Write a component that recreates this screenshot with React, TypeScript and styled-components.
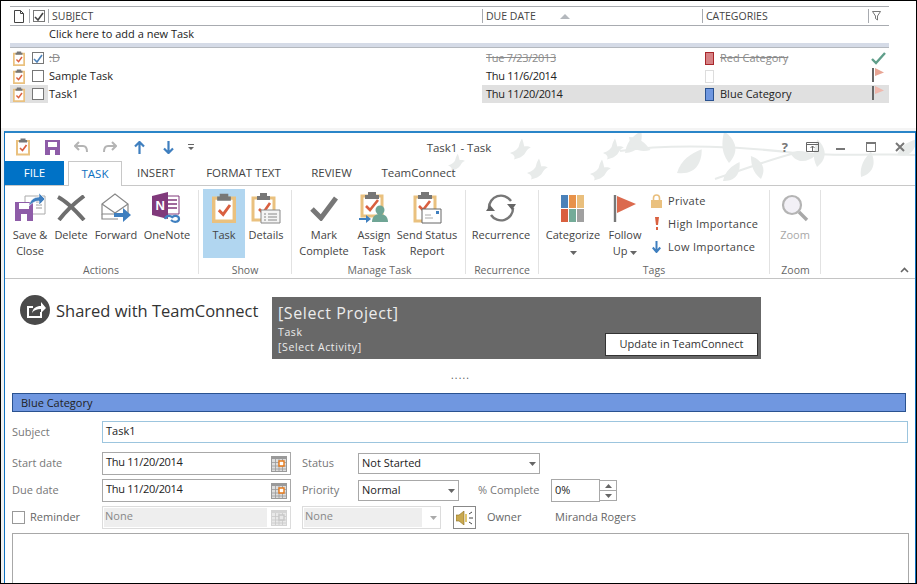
import styled, { createGlobalStyle } from "styled-components";

const GlobalStyle = createGlobalStyle`
  html, body {
    margin: 0;
    padding: 0;
    background: #fff;
  }
  * {
    box-sizing: border-box;
  }
`;

const Frame = styled.div`
  width: 917px;
  height: 584px;
  border: 1px solid #000;
  background: #f0f0f0;
  overflow: hidden;
  font-family: "Open Sans", "Noto Sans", sans-serif;
  font-size: 11px;
  color: #333;
  display: flex;
  flex-direction: column;
`;

/* ---------- task list ---------- */

const ListPanel = styled.div`
  height: 130px;
  background: #fff;
  padding: 5px 27px 0 9px;
  border-bottom: 3px solid #f4f4f4;
  flex: none;
`;

const ListRow = styled.div<{ $h?: number }>`
  display: grid;
  grid-template-columns: 19px 19px 434px 220px 166px 21px;
  height: ${(p) => p.$h ?? 18}px;
  align-items: center;
`;

const HeaderRow = styled(ListRow)`
  border-top: 1px solid #a8abb0;
  border-bottom: 1px solid #a8abb0;
  color: #444;
  font-size: 10.5px;
`;

const HeadCell = styled.div<{ $line?: boolean }>`
  height: 14px;
  display: flex;
  align-items: center;
  padding-left: ${(p) => (p.$line ? 3 : 4)}px;
  gap: 24px;
  border-left: ${(p) => (p.$line ? "1px solid #a8abb0" : "none")};
`;

const AddRow = styled.div`
  height: 17px;
  line-height: 16px;
  padding-left: 39px;
  color: #222;
`;

const Band = styled.div`
  height: 5px;
  background: #d5dbe7;
  border-bottom: 1px solid #b4b8be;
  margin-bottom: 1px;
`;

const Cell = styled.div<{ $sel?: boolean; $done?: boolean }>`
  height: 18px;
  display: flex;
  align-items: center;
  gap: 6px;
  padding-left: 4px;
  padding-bottom: 2px;
  background: ${(p) => (p.$sel ? "#e0e0e0" : "transparent")};
  color: ${(p) => (p.$done ? "#8b8b8b" : "#222")};
  text-decoration: ${(p) => (p.$done ? "line-through" : "none")};
`;

const IconCell = styled(Cell)`
  padding-left: 3px;
  padding-bottom: 0;
`;

const SubjectCell = styled(Cell)`
  padding-left: 1px;
`;

const DateCell = styled(Cell)`
  letter-spacing: -0.3px;
`;

const Swatch = styled.span<{ $fill: string; $edge: string }>`
  width: 9px;
  height: 13px;
  margin: 2px 0 0 -1px;
  background: ${(p) => p.$fill};
  border: 1px solid ${(p) => p.$edge};
  flex: none;
`;

const TinyCheck = styled.span`
  width: 12px;
  height: 12px;
  border: 1px solid #777;
  background: #fff;
  display: flex;
  align-items: center;
  justify-content: center;
`;

/* ---------- task window ---------- */

const TaskWindow = styled.div`
  position: relative;
  flex: 1;
  margin-left: 3px;
  min-height: 0;
  background: #fff;
  border-top: 2px solid #2a85c8;
  border-left: 1px solid #0f72c0;
  border-right: 1px solid #0f72c0;
  overflow: hidden;
`;

const Foliage = styled.svg`
  position: absolute;
  top: 0;
  right: 0;
  pointer-events: none;
`;

const TitleBar = styled.div`
  position: relative;
  height: 28px;
  display: grid;
  grid-template-columns: 1fr auto 1fr;
  align-items: center;
`;

const QuickAccess = styled.div`
  display: flex;
  align-items: center;
  height: 28px;
  padding-left: 11px;
`;

const QuickSlot = styled.span<{ $w: number }>`
  width: ${(p) => p.$w}px;
  display: flex;
  align-items: center;
  flex: none;
`;

const WindowTitle = styled.div`
  font-size: 11.5px;
  color: #444;
  margin-right: 2px;
`;

const WindowControls = styled.div`
  display: flex;
  justify-content: flex-end;
  align-items: center;
  height: 28px;
  padding-right: 10px;
`;

const ControlSlot = styled.span<{ $w: number }>`
  width: ${(p) => p.$w}px;
  display: flex;
  justify-content: flex-end;
  color: #777;
  font-weight: 700;
  font-size: 13px;
`;

const TabStrip = styled.div`
  position: relative;
  display: flex;
  height: 25px;
  border-bottom: 1px solid #c8c8c8;
`;

const FileTab = styled.div`
  width: 59px;
  height: 24px;
  margin-right: 4px;
  padding-bottom: 2px;
  background: #0072c6;
  color: #fff;
  font-size: 11.5px;
  display: flex;
  align-items: center;
  justify-content: center;
`;

const Tab = styled.div<{ $w: number; $active?: boolean }>`
  width: ${(p) => p.$w}px;
  height: ${(p) => (p.$active ? 25 : 24)}px;
  padding-bottom: 2px;
  font-size: 11.5px;
  display: flex;
  align-items: center;
  justify-content: center;
  background: ${(p) => (p.$active ? "#fff" : "transparent")};
  color: ${(p) => (p.$active ? "#0b6fc0" : "#444")};
  border: ${(p) => (p.$active ? "1px solid #c8c8c8" : "none")};
  border-bottom: none;
`;

const Ribbon = styled.div`
  height: 93px;
  display: flex;
  border-bottom: 1px solid #c4c4c4;
  padding-top: 4px;
`;

const Group = styled.div<{ $w: number; $pad?: number }>`
  width: ${(p) => p.$w}px;
  height: 84px;
  flex: none;
  padding-left: ${(p) => p.$pad ?? 0}px;
  border-right: 1px solid #e2e2e2;
  display: flex;
  flex-direction: column;
`;

const GroupBody = styled.div`
  flex: 1;
  display: flex;
  margin-top: -1px;
  min-height: 0;
`;

const GroupLabel = styled.div`
  height: 16px;
  line-height: 16px;
  margin: 0 0 -4px -4px;
  text-align: center;
  color: #666;
  font-size: 10.5px;
  flex: none;
`;

const RibbonButton = styled.div<{ $w: number; $on?: boolean; $dim?: boolean }>`
  width: ${(p) => p.$w}px;
  height: 69px;
  flex: none;
  padding-top: 3px;
  display: flex;
  flex-direction: column;
  align-items: center;
  background: ${(p) => (p.$on ? "#b1d6f0" : "transparent")};
  color: ${(p) => (p.$dim ? "#a8a8a8" : "#444")};
`;

const IconBox = styled.div`
  height: 32px;
  display: flex;
  align-items: center;
  justify-content: center;
  flex: none;
`;

const ButtonText = styled.div`
  margin-top: 3px;
  line-height: 16px;
  text-align: center;
  white-space: nowrap;
`;

const SmallList = styled.div`
  display: flex;
  flex-direction: column;
  margin-left: 3px;
`;

const SmallItem = styled.div`
  height: 23px;
  display: flex;
  align-items: center;
  gap: 5px;
  color: #444;
  letter-spacing: 0.3px;
`;

const SmallIcon = styled.span`
  width: 13px;
  display: flex;
  justify-content: center;
`;

const Collapse = styled.div`
  flex: 1;
  display: flex;
  align-items: flex-end;
  justify-content: flex-end;
  padding: 0 6px 5px 0;
`;

/* ---------- form ---------- */

const Content = styled.div`
  padding: 18px 0 0 7px;
`;

const SharedRow = styled.div`
  display: flex;
  height: 62px;
`;

const SharedInfo = styled.div`
  width: 260px;
  padding-left: 8px;
  margin-top: -3px;
  height: 32px;
  display: flex;
  align-items: center;
  gap: 6px;
  font-size: 16.5px;
  color: #333;
  white-space: nowrap;
  flex: none;
`;

const ProjectPanel = styled.div`
  width: 489px;
  height: 62px;
  background: #686868;
  color: #ececec;
  display: flex;
  justify-content: space-between;
  padding: 0 3px 3px 6px;
`;

const ProjectText = styled.div`
  display: flex;
  flex-direction: column;
  font-size: 10.5px;
  line-height: 15px;
  letter-spacing: 0.6px;
`;

const ProjectName = styled.div`
  font-size: 16px;
  line-height: 24px;
  margin-top: 4px;
`;

const UpdateButton = styled.div`
  align-self: flex-end;
  width: 153px;
  height: 23px;
  padding-bottom: 3px;
  background: #fff;
  border: 1px solid #333;
  color: #333;
  display: flex;
  align-items: center;
  justify-content: center;
`;

const Dots = styled.div`
  height: 34px;
  line-height: 33px;
  padding-left: 439px;
  font-size: 10px;
  color: #555;
  letter-spacing: 1.2px;
`;

const CategoryBar = styled.div`
  width: 894px;
  height: 19px;
  background: #7097e0;
  border: 1px solid #2a5290;
  color: #222;
  padding-left: 8px;
  line-height: 17px;
`;

const FormRow = styled.div<{ $top: number; $h?: number }>`
  display: flex;
  align-items: center;
  height: ${(p) => p.$h ?? 23}px;
  margin-top: ${(p) => p.$top}px;
`;

const FieldLabel = styled.div<{ $w: number; $ml?: number; $dim?: boolean }>`
  width: ${(p) => p.$w}px;
  margin-left: ${(p) => p.$ml ?? 0}px;
  padding-bottom: 2px;
  flex: none;
  color: ${(p) => (p.$dim ? "#666" : "#777")};
`;

const SubjectInput = styled.div`
  width: 806px;
  height: 22px;
  border: 1px solid #9cc5de;
  padding-left: 3px;
  line-height: 18px;
  color: #222;
`;

const Box = styled.div<{ $w: number; $h?: number; $off?: boolean; $ml?: number }>`
  width: ${(p) => p.$w}px;
  height: ${(p) => p.$h ?? 23}px;
  margin-left: ${(p) => p.$ml ?? 0}px;
  flex: none;
  display: flex;
  align-items: center;
  justify-content: space-between;
  border: 1px solid ${(p) => (p.$off ? "#dcdcdc" : "#a8a8a8")};
  padding: ${(p) => (p.$off ? "1px 3px 1px 1px" : "0 3px")};
  color: ${(p) => (p.$off ? "#888" : "#222")};
`;

const BoxValue = styled.span`
  padding-bottom: 2px;
`;

const DateValue = styled.span`
  padding-bottom: 5px;
  letter-spacing: -0.3px;
`;

const OffValue = styled.span<{ $w: number }>`
  width: ${(p) => p.$w}px;
  height: 100%;
  background: #eee;
  padding-left: 1px;
  line-height: 15px;
`;

const SpinBox = styled.div`
  width: 17px;
  height: 21px;
  flex: none;
  border: 1px solid #a8a8a8;
  border-left: none;
  display: flex;
  flex-direction: column;
`;

const SpinPart = styled.div<{ $up?: boolean }>`
  flex: 1;
  display: flex;
  align-items: center;
  justify-content: center;
  border-bottom: ${(p) => (p.$up ? "1px solid #a8a8a8" : "none")};
`;

const CheckBox = styled.div`
  width: 13px;
  height: 13px;
  border: 1px solid #999;
  margin-right: 5px;
  flex: none;
`;

const SpeakerButton = styled.div`
  width: 23px;
  height: 23px;
  margin-left: 12px;
  border: 1px solid #888;
  display: flex;
  align-items: center;
  justify-content: center;
  flex: none;
`;

const OwnerName = styled.div`
  color: #666;
  padding-bottom: 2px;
`;

const Notes = styled.div`
  width: 897px;
  height: 60px;
  margin-top: 4px;
  border: 1px solid #a8a8a8;
`;

/* ---------- drawings ---------- */

function Clipboard({ size = 14 }: { size?: number }) {
  return (
    <svg width={size} height={size * 1.25} viewBox="0 0 28 35">
      <path d="M2 6h24v27H2z" fill="#fff" stroke="#eac17f" strokeWidth="4" />
      <path d="M9 1h10v3h3v5H6V4h3z" fill="#777" />
      <path d="M8 20l5 5 8-11" fill="none" stroke="#d95f3f" strokeWidth="3.4" />
    </svg>
  );
}

const Tri = ({ up, c = "#666" }: { up?: boolean; c?: string }) => (
  <svg width="7" height="4" viewBox="0 0 7 4">
    <path d={up ? "M3.5 0L7 4H0z" : "M0 0h7L3.5 4z"} fill={c} />
  </svg>
);

const Cal = ({ off }: { off?: boolean }) => (
  <svg width="16" height="16" viewBox="0 0 16 16">
    <path d="M0 0h16v16H0z" fill={off ? "#d4d4d4" : "#9a9a9a"} />
    <path d="M1 3h14v12H1z" fill={off ? "#e8e8e8" : "#ddd"} />
    <path
      d="M4.5 3v12M8 3v12M11.5 3v12M1 6.5h14M1 10h14M1 13h14"
      stroke={off ? "#c8c8c8" : "#999"}
      strokeWidth=".8"
    />
    <path d="M8 5h5v5H8z" fill={off ? "#e8e8e8" : "#fff"} stroke={off ? "#c8c8c8" : "#e67a1a"} strokeWidth="1.4" />
  </svg>
);

const Flag = ({ c }: { c: string }) => (
  <svg width="14" height="16" viewBox="0 0 14 16">
    <path d="M1 1v14" stroke="#666" strokeWidth="2" />
    <path d="M3 1l9 4.5L3 9z" fill={c} />
  </svg>
);

const TreeLeaf = ({ x, y, r, s = 1 }: { x: number; y: number; r: number; s?: number }) => (
  <path
    d="M0 0C5-8 12-10 20-11 18-3 12 5 0 0z"
    transform={`translate(${x} ${y}) rotate(${r}) scale(${s})`}
  />
);

const Bird = ({ x, y, s = 1 }: { x: number; y: number; s?: number }) => (
  <path
    d="M0 10C6 8 9 6 11 2 12-3 14-6 15-8 17-4 17 0 18 2 21 1 24 2 26 3 22 4 21 7 19 10 16 15 10 17 5 18 7 15 5 12 0 10z"
    transform={`translate(${x} ${y}) scale(${s})`}
  />
);

function TitleFoliage() {
  return (
    <Foliage width="470" height="52" viewBox="0 0 470 52">
      <g fill="#e8ebea">
        <Bird x={3} y={26} s={0.65} />
        <Bird x={65} y={12} s={0.8} />
        <Bird x={82} y={32} s={0.8} />
        <Bird x={145} y={33} s={0.8} />
        <Bird x={158} y={12} s={0.8} />
        <TreeLeaf x={180} y={20} r={-25} s={1.2} />
        <TreeLeaf x={184} y={4} r={60} s={1.1} />
        <TreeLeaf x={232} y={40} r={-15} s={1.5} />
        <TreeLeaf x={284} y={30} r={-70} s={1.4} />
        <TreeLeaf x={278} y={48} r={-20} s={1.1} />
        <TreeLeaf x={316} y={46} r={-85} s={1.1} />
        <TreeLeaf x={372} y={34} r={-60} s={1.2} />
        <TreeLeaf x={416} y={44} r={-40} s={1.2} />
        <TreeLeaf x={345} y={20} r={35} s={1.1} />
        <TreeLeaf x={452} y={22} r={-10} s={1.1} />
      </g>
      <path
        d="M175 18C230 10 300 14 350 20 400 24 440 20 470 22M270 46C300 36 320 28 350 20"
        stroke="#e8ebea"
        strokeWidth="2"
        fill="none"
      />
    </Foliage>
  );
}

function SaveClose() {
  return (
    <svg width="32" height="32" viewBox="0 0 32 32">
      <path d="M11 4h20v18H11z" fill="#fff" stroke="#aaa" />
      <path d="M22 10h6M22 13h6M22 16h6" stroke="#999" />
      <path d="M1 10h18v19H1z" fill="#8e5ca8" />
      <path d="M5 11h10v6H5zM7 22h6v7H7z" fill="#fff" />
      <path d="M15 14C16 8 20 5 25 5V1l6 6-6 6V9c-4 0-7 2-10 5z" fill="#3f7fbf" stroke="#fff" strokeWidth=".6" />
    </svg>
  );
}

function Forward() {
  return (
    <svg width="32" height="32" viewBox="0 0 32 32">
      <path d="M2 12L15 2l13 10v10H2z" fill="#fff" stroke="#888" strokeWidth="1.2" />
      <path d="M2 12l13 9 13-9" fill="none" stroke="#888" strokeWidth="1.2" />
      <path d="M2 22v5h16" fill="none" stroke="#888" strokeWidth="1.2" />
      <path d="M14 21h9v-5l8 7-8 7v-5h-9z" fill="#3f7fbf" />
    </svg>
  );
}

function OneNote() {
  return (
    <svg width="30" height="32" viewBox="0 0 30 32">
      <path d="M12 4h15v18H12z" fill="#fff" stroke="#80397b" />
      <path d="M16 8h9M16 12h9M16 16h9" stroke="#80397b" strokeWidth="1.4" />
      <path d="M0 4l16-4v27L0 23z" fill="#80397b" />
      <text x="3.5" y="18" fontSize="13" fontWeight="700" fill="#fff" fontFamily="Liberation Sans">N</text>
      <path d="M13 27c1-4 6-4 8-1m-2 2c3 3 8 2 8-1 0-4-6-4-7-1" fill="none" stroke="#3f7fbf" strokeWidth="2.2" />
    </svg>
  );
}

function Details() {
  return (
    <svg width="30" height="32" viewBox="0 0 30 32">
      <path d="M2 6h21v22H2z" fill="#fff" stroke="#eac17f" strokeWidth="3" />
      <path d="M9 1h7v3h3v4H6V4h3z" fill="#777" />
      <path d="M8 17l4 4 7-10" fill="none" stroke="#d95f3f" strokeWidth="2.6" />
      <path d="M10 18h19v13H10z" fill="#f4f4f4" stroke="#888" />
      <path d="M13 22h2M17 22h9M13 25h2M17 25h9M13 28h2M17 28h9" stroke="#888" />
    </svg>
  );
}

function AssignTask() {
  return (
    <svg width="30" height="32" viewBox="0 0 30 32">
      <path d="M3 4h20v20H3z" fill="#fff" stroke="#eac17f" strokeWidth="3" />
      <path d="M9 0h8v3h3v4H6V3h3z" fill="#777" />
      <path d="M7 14l4 4 8-10" fill="none" stroke="#d95f3f" strokeWidth="2.6" />
      <circle cx="21" cy="18" r="4.5" fill="#6fa595" />
      <path d="M13 30c0-6 4-8 8-8s8 2 8 8z" fill="#6fa595" />
      <path d="M0 26h7v-3l5 4-5 4v-3H0z" fill="#3f7fbf" />
    </svg>
  );
}

function StatusReport() {
  return (
    <svg width="30" height="32" viewBox="0 0 30 32">
      <path d="M3 5h20v24H3z" fill="#fff" stroke="#eac17f" strokeWidth="3" />
      <path d="M9 0h8v3h3v4H6V3h3z" fill="#777" />
      <path d="M7 14l4 4 7-9" fill="none" stroke="#d95f3f" strokeWidth="2.6" />
      <path d="M10 17h19v14H10z" fill="#fff" stroke="#666" />
      <path d="M13 26h8M13 23h6" stroke="#aaa" />
      <path d="M24 19h3v3h-3z" fill="#3f7fbf" />
    </svg>
  );
}

function Recurrence() {
  return (
    <svg width="32" height="30" viewBox="0 0 32 30">
      <path d="M4 15A12 12 0 0 1 26 8" fill="none" stroke="#777" strokeWidth="2.4" />
      <path d="M28 15A12 12 0 0 1 6 22" fill="none" stroke="#777" strokeWidth="2.4" />
      <path d="M22 11h9l-4 6zM1 18l4-6 5 6z" fill="#666" />
    </svg>
  );
}

function Categorize() {
  const cells = ["#4b81b9", "#e8924a", "#e9bf7d", "#d9603f", "#74ab98", "#a0a0a0"];
  return (
    <svg width="24" height="27" viewBox="0 0 24 27">
      {cells.map((c, i) => (
        <rect key={c} x={(i % 3) * 8} y={i < 3 ? 0 : 14} width="7" height="13" fill={c} />
      ))}
    </svg>
  );
}

function Speaker() {
  return (
    <svg width="17" height="14" viewBox="0 0 17 14">
      <path d="M0 4h3l5-4v14l-5-4H0z" fill="#c9a94f" stroke="#8a6d20" strokeWidth=".6" />
      <path d="M9 3h2v8H9z" fill="#e0c670" />
      <path d="M13 3l3-2M13 7h4M13 11l3 2" stroke="#444" />
    </svg>
  );
}

export default function App() {
  return (
    <>
      <GlobalStyle />
      <Frame>
        <ListPanel>
          <HeaderRow $h={20}>
            <HeadCell>
              <svg width="10" height="13" viewBox="0 0 10 13">
                <path d="M.5.5h6l3 3v9H.5zM6.5.5v3h3" fill="#fff" stroke="#444" />
              </svg>
            </HeadCell>
            <HeadCell $line>
              <TinyCheck>
                <svg width="10" height="9" viewBox="0 0 10 9">
                  <path d="M1 5l3 3 5-7" fill="none" stroke="#444" strokeWidth="1.6" />
                </svg>
              </TinyCheck>
            </HeadCell>
            <HeadCell $line>SUBJECT</HeadCell>
            <HeadCell $line>
              DUE DATE
              <svg width="10" height="5" viewBox="0 0 10 5">
                <path d="M5 0l5 5H0z" fill="#b4b8bd" />
              </svg>
            </HeadCell>
            <HeadCell $line>CATEGORIES</HeadCell>
            <HeadCell $line>
              <svg width="9" height="10" viewBox="0 0 9 10">
                <path d="M.5.5h8L5.5 5v4L3.5 7.5V5z" fill="#fff" stroke="#555" strokeWidth=".8" />
              </svg>
            </HeadCell>
          </HeaderRow>
          <AddRow>Click here to add a new Task</AddRow>
          <Band />
          <ListRow>
            <IconCell>
              <Clipboard size={12} />
            </IconCell>
            <IconCell>
              <TinyCheck>
                <svg width="10" height="9" viewBox="0 0 10 9">
                  <path d="M1 5l3 3 5-7" fill="none" stroke="#4b81b9" strokeWidth="1.6" />
                </svg>
              </TinyCheck>
            </IconCell>
            <SubjectCell $done>:D</SubjectCell>
            <DateCell $done>Tue 7/23/2013</DateCell>
            <Cell $done>
              <Swatch $fill="#d68285" $edge="#a8272b" />
              Red Category
            </Cell>
            <IconCell>
              <svg width="15" height="13" viewBox="0 0 15 13">
                <path d="M1 7l4 4 9-10" fill="none" stroke="#5f9e8a" strokeWidth="2.4" />
              </svg>
            </IconCell>
          </ListRow>
          <ListRow>
            <IconCell>
              <Clipboard size={12} />
            </IconCell>
            <IconCell>
              <TinyCheck />
            </IconCell>
            <SubjectCell>Sample Task</SubjectCell>
            <DateCell>Thu 11/6/2014</DateCell>
            <Cell>
              <Swatch $fill="#fff" $edge="#ddd" />
            </Cell>
            <Cell>
              <Flag c="#e8a594" />
            </Cell>
          </ListRow>
          <ListRow>
            <IconCell $sel>
              <Clipboard size={12} />
            </IconCell>
            <IconCell $sel>
              <TinyCheck />
            </IconCell>
            <SubjectCell>Task1</SubjectCell>
            <DateCell $sel>Thu 11/20/2014</DateCell>
            <Cell $sel>
              <Swatch $fill="#6f97e0" $edge="#2a5290" />
              Blue Category
            </Cell>
            <Cell $sel>
              <Flag c="#efb8ad" />
            </Cell>
          </ListRow>
        </ListPanel>

        <TaskWindow>
          <TitleFoliage />
          <TitleBar>
            <QuickAccess>
              <QuickSlot $w={29}>
                <Clipboard size={14} />
              </QuickSlot>
              <QuickSlot $w={29}>
                <svg width="15" height="15" viewBox="0 0 15 15">
                  <path d="M0 0h15v15H0z" fill="#8e5ca8" />
                  <path d="M3 2h9v5H3zM5 10h5v5H5z" fill="#fff" />
                </svg>
              </QuickSlot>
              <QuickSlot $w={29}>
                <svg width="14" height="12" viewBox="0 0 14 12">
                  <path d="M5 1L1 5l4 4M1 5h8c3 0 4 2 4 6" fill="none" stroke="#b4b4b4" strokeWidth="2" />
                </svg>
              </QuickSlot>
              <QuickSlot $w={31}>
                <svg width="14" height="12" viewBox="0 0 14 12">
                  <path d="M9 1l4 4-4 4M13 5H5C2 5 1 7 1 11" fill="none" stroke="#b4b4b4" strokeWidth="2" />
                </svg>
              </QuickSlot>
              <QuickSlot $w={29}>
                <svg width="11" height="13" viewBox="0 0 11 13">
                  <path d="M5.5 13V1M1 5.5L5.5 1 10 5.5" fill="none" stroke="#3f7fbf" strokeWidth="2.2" />
                </svg>
              </QuickSlot>
              <QuickSlot $w={25}>
                <svg width="11" height="13" viewBox="0 0 11 13">
                  <path d="M5.5 0v12M1 7.5L5.5 12 10 7.5" fill="none" stroke="#3f7fbf" strokeWidth="2.2" />
                </svg>
              </QuickSlot>
              <QuickSlot $w={8}>
                <svg width="6" height="7" viewBox="0 0 6 7">
                  <path d="M0 0h6v1H0zM0 3h6L3 6z" fill="#666" />
                </svg>
              </QuickSlot>
            </QuickAccess>
            <WindowTitle>Task1 - Task</WindowTitle>
            <WindowControls>
              <ControlSlot $w={10}>?</ControlSlot>
              <ControlSlot $w={31}>
                <svg width="13" height="10" viewBox="0 0 13 10">
                  <path d="M.5.5h12v9H.5zM.5 2.5h12" fill="none" stroke="#666" />
                  <path d="M6.5 9V4M4.5 6l2-2 2 2" fill="none" stroke="#666" />
                </svg>
              </ControlSlot>
              <ControlSlot $w={27}>
                <svg width="10" height="10" viewBox="0 0 10 10">
                  <path d="M0 6h9v2H0z" fill="#777" />
                </svg>
              </ControlSlot>
              <ControlSlot $w={30}>
                <svg width="10" height="10" viewBox="0 0 10 10">
                  <path d="M.5 1.5h9v8h-9z" fill="none" stroke="#777" />
                  <path d="M0 0h10v2H0z" fill="#777" />
                </svg>
              </ControlSlot>
              <ControlSlot $w={29}>
                <svg width="10" height="10" viewBox="0 0 10 10">
                  <path d="M1 1l8 8M9 1L1 9" stroke="#777" strokeWidth="2" />
                </svg>
              </ControlSlot>
            </WindowControls>
          </TitleBar>

          <TabStrip>
            <FileTab>FILE</FileTab>
            <Tab $w={54} $active>
              TASK
            </Tab>
            <Tab $w={68}>INSERT</Tab>
            <Tab $w={107}>FORMAT TEXT</Tab>
            <Tab $w={69}>REVIEW</Tab>
            <Tab $w={105}>TeamConnect</Tab>
          </TabStrip>

          <Ribbon>
            <Group $w={194} $pad={3}>
              <GroupBody>
                <RibbonButton $w={44}>
                  <IconBox>
                    <SaveClose />
                  </IconBox>
                  <ButtonText>
                    Save &amp;
                    <br />
                    Close
                  </ButtonText>
                </RibbonButton>
                <RibbonButton $w={38}>
                  <IconBox>
                    <svg width="30" height="26" viewBox="0 0 30 26">
                      <path d="M2 2C10 6 20 16 28 25M28 1C20 7 10 16 3 25" fill="none" stroke="#6e6e6e" strokeWidth="4" />
                    </svg>
                  </IconBox>
                  <ButtonText>Delete</ButtonText>
                </RibbonButton>
                <RibbonButton $w={52}>
                  <IconBox>
                    <Forward />
                  </IconBox>
                  <ButtonText>Forward</ButtonText>
                </RibbonButton>
                <RibbonButton $w={50}>
                  <IconBox>
                    <OneNote />
                  </IconBox>
                  <ButtonText>OneNote</ButtonText>
                </RibbonButton>
              </GroupBody>
              <GroupLabel>Actions</GroupLabel>
            </Group>

            <Group $w={93} $pad={4}>
              <GroupBody>
                <RibbonButton $w={42} $on>
                  <IconBox>
                    <Clipboard size={24} />
                  </IconBox>
                  <ButtonText>Task</ButtonText>
                </RibbonButton>
                <RibbonButton $w={42}>
                  <IconBox>
                    <Details />
                  </IconBox>
                  <ButtonText>Details</ButtonText>
                </RibbonButton>
              </GroupBody>
              <GroupLabel>Show</GroupLabel>
            </Group>

            <Group $w={174} $pad={6}>
              <GroupBody>
                <RibbonButton $w={52}>
                  <IconBox>
                    <svg width="30" height="26" viewBox="0 0 30 26">
                      <path d="M3 14l9 9L27 3" fill="none" stroke="#777" strokeWidth="5" />
                    </svg>
                  </IconBox>
                  <ButtonText>
                    Mark
                    <br />
                    Complete
                  </ButtonText>
                </RibbonButton>
                <RibbonButton $w={48}>
                  <IconBox>
                    <AssignTask />
                  </IconBox>
                  <ButtonText>
                    Assign
                    <br />
                    Task
                  </ButtonText>
                </RibbonButton>
                <RibbonButton $w={58}>
                  <IconBox>
                    <StatusReport />
                  </IconBox>
                  <ButtonText>
                    Send Status
                    <br />
                    Report
                  </ButtonText>
                </RibbonButton>
              </GroupBody>
              <GroupLabel>Manage Task</GroupLabel>
            </Group>

            <Group $w={73} $pad={4}>
              <GroupBody>
                <RibbonButton $w={62}>
                  <IconBox>
                    <Recurrence />
                  </IconBox>
                  <ButtonText>Recurrence</ButtonText>
                </RibbonButton>
              </GroupBody>
              <GroupLabel>Recurrence</GroupLabel>
            </Group>

            <Group $w={231} $pad={4}>
              <GroupBody>
                <RibbonButton $w={60}>
                  <IconBox>
                    <Categorize />
                  </IconBox>
                  <ButtonText>
                    Categorize
                    <br />
                    <Tri />
                  </ButtonText>
                </RibbonButton>
                <RibbonButton $w={44}>
                  <IconBox>
                    <svg width="24" height="28" viewBox="0 0 24 28">
                      <path d="M2 1v27" stroke="#777" strokeWidth="2.4" />
                      <path d="M4 2l19 8L4 19z" fill="#db6a4e" />
                    </svg>
                  </IconBox>
                  <ButtonText>
                    Follow
                    <br />
                    Up <Tri />
                  </ButtonText>
                </RibbonButton>
                <SmallList>
                  <SmallItem>
                    <SmallIcon>
                      <svg width="11" height="14" viewBox="0 0 11 14">
                        <path d="M2.5 6V4a3 3 0 0 1 6 0v2" fill="none" stroke="#e9bf7d" strokeWidth="1.6" />
                        <path d="M0 6h11v8H0z" fill="#eac17f" />
                      </svg>
                    </SmallIcon>
                    Private
                  </SmallItem>
                  <SmallItem>
                    <SmallIcon>
                      <svg width="4" height="13" viewBox="0 0 4 13">
                        <path d="M0 0h4l-1 8H1zM1 10h2v3H1z" fill="#d9603f" />
                      </svg>
                    </SmallIcon>
                    High Importance
                  </SmallItem>
                  <SmallItem>
                    <SmallIcon>
                      <svg width="9" height="12" viewBox="0 0 9 12">
                        <path d="M4.5 0v11M.8 6.5L4.5 11l3.7-4.5" fill="none" stroke="#3f7fbf" strokeWidth="2" />
                      </svg>
                    </SmallIcon>
                    Low Importance
                  </SmallItem>
                </SmallList>
              </GroupBody>
              <GroupLabel>Tags</GroupLabel>
            </Group>

            <Group $w={51} $pad={5}>
              <GroupBody>
                <RibbonButton $w={40} $dim>
                  <IconBox>
                    <svg width="28" height="28" viewBox="0 0 28 28">
                      <circle cx="11" cy="11" r="9" fill="#f2f0f6" stroke="#b4b4b4" strokeWidth="2.2" />
                      <path d="M18 18l8 8" stroke="#a8a8a8" strokeWidth="3.4" />
                    </svg>
                  </IconBox>
                  <ButtonText>Zoom</ButtonText>
                </RibbonButton>
              </GroupBody>
              <GroupLabel>Zoom</GroupLabel>
            </Group>

            <Collapse>
              <svg width="9" height="6" viewBox="0 0 9 6">
                <path d="M1 5l3.5-3.5L8 5" fill="none" stroke="#666" strokeWidth="1.6" />
              </svg>
            </Collapse>
          </Ribbon>

          <Content>
            <SharedRow>
              <SharedInfo>
                <svg width="30" height="30" viewBox="0 0 30 30">
                  <circle cx="15" cy="15" r="15" fill="#4a4a4a" />
                  <path d="M7 11h6v2H9v8h11v-4h2v6H7z" fill="#fff" />
                  <path d="M12 18c1-5 4-7 9-7V7l5 6-5 5v-4c-4 0-7 1-9 4z" fill="#fff" />
                </svg>
                Shared with TeamConnect
              </SharedInfo>
              <ProjectPanel>
                <ProjectText>
                  <ProjectName>[Select Project]</ProjectName>
                  <span>Task</span>
                  <span>[Select Activity]</span>
                </ProjectText>
                <UpdateButton>Update in TeamConnect</UpdateButton>
              </ProjectPanel>
            </SharedRow>

            <Dots>.....</Dots>
            <CategoryBar>Blue Category</CategoryBar>

            <FormRow $top={9} $h={22}>
              <FieldLabel $w={90}>Subject</FieldLabel>
              <SubjectInput>Task1</SubjectInput>
            </FormRow>

            <FormRow $top={9}>
              <FieldLabel $w={90}>Start date</FieldLabel>
              <Box $w={189}>
                <DateValue>Thu 11/20/2014</DateValue>
                <Cal />
              </Box>
              <FieldLabel $w={56} $ml={11}>
                Status
              </FieldLabel>
              <Box $w={182} $h={21}>
                <BoxValue>Not Started</BoxValue>
                <Tri />
              </Box>
            </FormRow>

            <FormRow $top={4}>
              <FieldLabel $w={90}>Due date</FieldLabel>
              <Box $w={189}>
                <DateValue>Thu 11/20/2014</DateValue>
                <Cal />
              </Box>
              <FieldLabel $w={56} $ml={11}>
                Priority
              </FieldLabel>
              <Box $w={101} $h={21}>
                <BoxValue>Normal</BoxValue>
                <Tri />
              </Box>
              <FieldLabel $w={73} $ml={19}>
                % Complete
              </FieldLabel>
              <Box $w={49}>
                <BoxValue>0%</BoxValue>
              </Box>
              <SpinBox>
                <SpinPart $up>
                  <Tri up />
                </SpinPart>
                <SpinPart>
                  <Tri />
                </SpinPart>
              </SpinBox>
            </FormRow>

            <FormRow $top={4}>
              <CheckBox />
              <FieldLabel $w={72} $dim>
                Reminder
              </FieldLabel>
              <Box $w={189} $off>
                <OffValue $w={163}>None</OffValue>
                <Cal off />
              </Box>
              <Box $w={139} $off $ml={11}>
                <OffValue $w={118}>None</OffValue>
                <Tri c="#aaa" />
              </Box>
              <SpeakerButton>
                <Speaker />
              </SpeakerButton>
              <FieldLabel $w={68} $ml={11} $dim>
                Owner
              </FieldLabel>
              <OwnerName>Miranda Rogers</OwnerName>
            </FormRow>

            <Notes />
          </Content>
        </TaskWindow>
      </Frame>
    </>
  );
}
